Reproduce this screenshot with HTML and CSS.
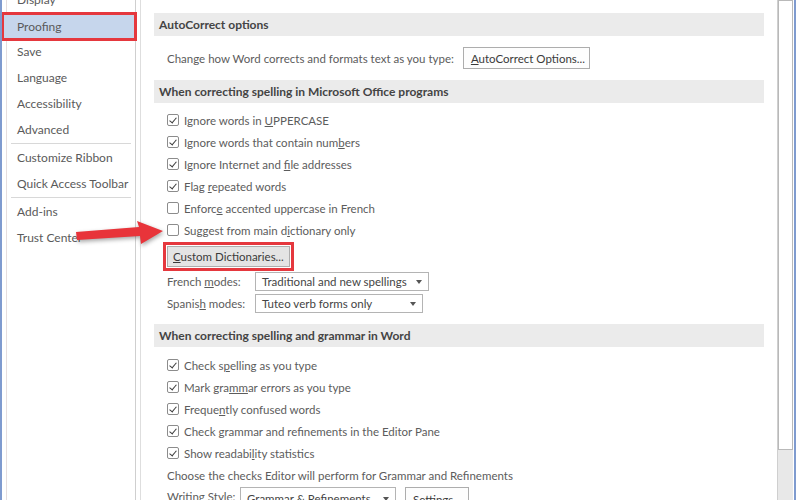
FILE: index.html
```html
<!DOCTYPE html>
<html lang="en">
<head>
  <meta charset="UTF-8">
  <title>Word Options - Proofing</title>
  <link rel="stylesheet" href="styles.css">
</head>
<body>
  <div class="window">
    <!-- left navigation -->
    <nav class="sidebar">
      <ul class="nav">
        <li>Display</li>
        <li class="active">Proofing</li>
        <li>Save</li>
        <li>Language</li>
        <li>Accessibility</li>
        <li>Advanced</li>
        <li class="sep"></li>
        <li>Customize Ribbon</li>
        <li>Quick Access Toolbar</li>
        <li class="sep"></li>
        <li>Add-ins</li>
        <li>Trust Center</li>
      </ul>
    </nav>

    <!-- options pane -->
    <main class="pane">
      <div class="content">
        <h3 class="head">AutoCorrect options</h3>
        <div class="row autocorrect">
          <span>Change how Word corrects and formats text as you type:</span>
          <button class="btn ac-btn"><u>A</u>utoCorrect Options...</button>
        </div>

        <h3 class="head">When correcting spelling in Microsoft Office programs</h3>
        <div class="checks first">
          <div class="check on"><span class="box"></span><span>Ignore words in <u>U</u>PPERCASE</span></div>
          <div class="check on"><span class="box"></span><span>Ignore words that contain num<u>b</u>ers</span></div>
          <div class="check on"><span class="box"></span><span>Ignore Internet and <u>f</u>ile addresses</span></div>
          <div class="check on"><span class="box"></span><span>Flag <u>r</u>epeated words</span></div>
          <div class="check"><span class="box"></span><span>Enforc<u>e</u> accented uppercase in French</span></div>
          <div class="check"><span class="box"></span><span>Suggest from main d<u>i</u>ctionary only</span></div>
        </div>
        <div class="row dict-row">
          <button class="btn dict-btn"><u>C</u>ustom Dictionaries...</button>
        </div>
        <div class="row mode-row">
          <span class="mode-label">French <u>m</u>odes:</span>
          <span class="select fr">Traditional and new spellings<i class="caret"></i></span>
        </div>
        <div class="row mode-row">
          <span class="mode-label">Spanis<u>h</u> modes:</span>
          <span class="select es">Tuteo verb forms only<i class="caret"></i></span>
        </div>

        <h3 class="head word-head">When correcting spelling and grammar in Word</h3>
        <div class="checks second">
          <div class="check on"><span class="box"></span><span>Check s<u>p</u>elling as you type</span></div>
          <div class="check on"><span class="box"></span><span>Mark gra<u>mm</u>ar errors as you type</span></div>
          <div class="check on"><span class="box"></span><span>Freque<u>n</u>tly confused words</span></div>
          <div class="check on"><span class="box"></span><span>Check grammar and refinements in the Editor Pane</span></div>
          <div class="check on"><span class="box"></span><span>Show readabi<u>l</u>ity statistics</span></div>
        </div>
        <div class="row plain">Choose the checks Editor will perform for Grammar and Refinements</div>
        <div class="row style-row">
          <span class="style-label">Writing Style:</span>
          <span class="select ws">Grammar &amp; Refinements<i class="caret"></i></span>
          <button class="btn settings">Settings...</button>
        </div>
      </div>
      <div class="scrollbar"><div class="thumb"></div></div>
    </main>

    <!-- red callout arrow -->
    <svg class="arrow" width="100" height="40" viewBox="70 215 100 40">
      <polygon points="76,232 139,227 137,221 163,231 141,244 140,236 77,240" fill="#e8343a"/>
    </svg>
  </div>
</body>
</html>
```

FILE: styles.css
```css
html, body {
  margin: 0;
  padding: 0;
  width: 799px;
  height: 500px;
  overflow: hidden;
  background: #ffffff;
  font-family: "Segoe UI", "Lato", "Noto Sans", sans-serif;
  font-size: 11.5px;
  color: #5c5c5c;
}

.window {
  position: relative;
  display: flex;
  width: 796px;
  height: 500px;
  overflow: hidden;
  border-left: 2px solid #7f9bcf;
  border-right: 2px solid #7f9bcf;
  box-sizing: border-box;
}

/* left navigation */
.sidebar {
  width: 128px;
  margin-left: 4px;
  border-left: 1px solid #e6dede;
  border-right: 1px solid #cfcfcf;
  font-size: 12px;
}
.nav {
  list-style: none;
  margin: -13px 0 0 0;
  padding: 0;
}
.nav li {
  height: 26px;
  line-height: 26px;
  padding-left: 10px;
  color: #5a5a5a;
  white-space: nowrap;
}
.nav li.active {
  position: relative;
  height: 25px;
  line-height: 25px;
  margin: 1px 0 0 -4px;
  padding-left: 14px;
  background: #c6d6ec;
  outline: 3px solid #e5383e;
  outline-offset: -1px;
}
.nav li.sep {
  height: 1px;
  background: #d8d8d8;
  margin: 0 4px 1px 4px;
  padding: 0;
}

/* options pane */
.pane {
  flex: 1;
  display: flex;
  margin-left: 4px;
  border-left: 1px solid #dedede;
}
.content {
  flex: 1;
  padding: 13px 13px 0 13px;
}
.head {
  margin: 0;
  height: 23px;
  line-height: 23px;
  padding-left: 5px;
  background: #ebebeb;
  font-size: 12px;
  font-weight: bold;
  color: #444444;
}
.head.word-head { margin-top: 10px; }

.row {
  display: flex;
  align-items: center;
  padding-left: 13px;
  white-space: nowrap;
}
.autocorrect {
  height: 44px;
  gap: 9px;
}

.checks { padding-left: 13px; }
.checks.first { margin-top: 6px; }
.checks.second { margin-top: 7px; }
.check {
  display: flex;
  align-items: center;
  height: 22px;
  white-space: nowrap;
}
.box {
  width: 12px;
  height: 12px;
  margin-right: 5px;
  border: 1px solid #8c8c8c;
  border-radius: 2px;
  box-sizing: border-box;
  flex: none;
  position: relative;
}
.check.on .box::after {
  content: "";
  position: absolute;
  left: 3px;
  top: 1px;
  width: 3px;
  height: 6px;
  border-right: 1.5px solid #3c3c3c;
  border-bottom: 1.5px solid #3c3c3c;
  transform: rotate(40deg);
}

.btn {
  font: inherit;
  color: #3a3a3a;
  background: #fdfdfd;
  border: 1px solid #adadad;
  height: 22px;
  padding: 0 7px;
  white-space: nowrap;
}
.ac-btn { width: 127px; }

.dict-row { margin-top: 4px; height: 22px; }
.dict-btn {
  height: 21px;
  padding: 0 5px;
  background: #e4e4e4;
  outline: 3px solid #e5383e;
  outline-offset: 1px;
  text-align: left;
}

.mode-row { height: 22px; }
.dict-row + .mode-row { margin-top: 3px; }
.mode-label { width: 88px; }
.select {
  position: relative;
  display: flex;
  align-items: center;
  height: 19px;
  padding-left: 6px;
  border: 1px solid #b4b4b4;
  background: #ffffff;
  color: #444444;
  box-sizing: border-box;
}
.select.fr { width: 174px; }
.select.es { width: 168px; }
.select.ws { width: 156px; height: 22px; }
.caret {
  position: absolute;
  right: 6px;
  top: 7px;
  border-left: 3px solid transparent;
  border-right: 3px solid transparent;
  border-top: 4px solid #555555;
}
.select.ws .caret { top: 9px; }

.plain { height: 22px; }
.style-row {
  margin-top: 1px;
  align-items: flex-start;
  height: 40px;
}
.style-label {
  width: 73px;
  line-height: 20px;
}
.settings {
  margin-left: 9px;
  width: 64px;
  height: 24px;
}

/* scrollbar */
.scrollbar {
  width: 15px;
  margin-right: 1px;
  background: #e8e8e8;
  border-left: 1px solid #cfcfcf;
}
.thumb {
  height: 450px;
  background: #ffffff;
  border: 1px solid #b9b9b9;
  box-sizing: border-box;
}

/* callout arrow */
.arrow {
  position: absolute;
  left: 68px;
  top: 215px;
  filter: drop-shadow(1px 2px 2px rgba(0, 0, 0, 0.35));
}
```
